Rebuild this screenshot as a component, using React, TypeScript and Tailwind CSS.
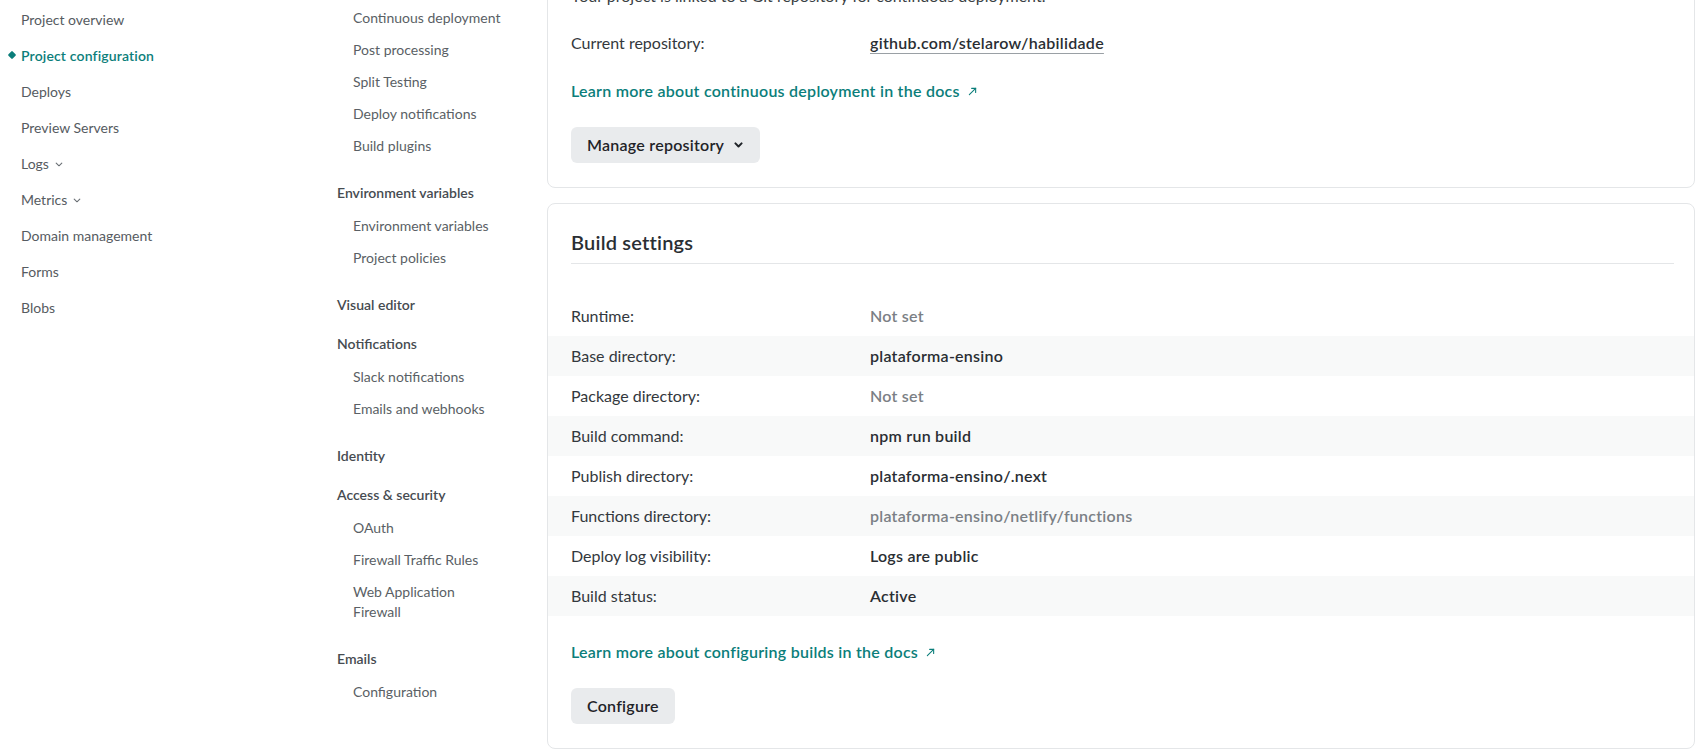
import { ReactNode } from "react";

const font = { fontFamily: "Lato, 'Open Sans', sans-serif" };

function Chevron({ className }: { className?: string }) {
  return (
    <svg viewBox="0 0 10 6" className={className} fill="none" stroke="currentColor" strokeWidth="1.4" strokeLinecap="round" strokeLinejoin="round">
      <path d="M1.5 1.2 5 4.6 8.5 1.2" />
    </svg>
  );
}

function External() {
  return (
    <svg viewBox="0 0 10 10" className="ml-2 h-[9px] w-[9px]" fill="none" stroke="currentColor" strokeWidth="1.2" strokeLinecap="round">
      <path d="M1.5 8.5 8.5 1.5" />
      <path d="M4 1.5h4.5V6" />
    </svg>
  );
}

const mainNav = [
  { label: "Project overview" },
  { label: "Project configuration", active: true },
  { label: "Deploys" },
  { label: "Preview Servers" },
  { label: "Logs", chevron: true },
  { label: "Metrics", chevron: true },
  { label: "Domain management" },
  { label: "Forms" },
  { label: "Blobs" },
];

const subNav: { title?: string; items: ReactNode[] }[] = [
  { items: ["Continuous deployment", "Post processing", "Split Testing", "Deploy notifications", "Build plugins"] },
  { title: "Environment variables", items: ["Environment variables", "Project policies"] },
  { title: "Visual editor", items: [] },
  { title: "Notifications", items: ["Slack notifications", "Emails and webhooks"] },
  { title: "Identity", items: [] },
  {
    title: "Access & security",
    items: [
      "OAuth",
      "Firewall Traffic Rules",
      <>
        Web Application
        <br />
        Firewall
      </>,
    ],
  },
  { title: "Emails", items: ["Configuration"] },
];

const buildRows = [
  { label: "Runtime:", value: "Not set", muted: true },
  { label: "Base directory:", value: "plataforma-ensino" },
  { label: "Package directory:", value: "Not set", muted: true },
  { label: "Build command:", value: "npm run build" },
  { label: "Publish directory:", value: "plataforma-ensino/.next" },
  { label: "Functions directory:", value: "plataforma-ensino/netlify/functions", muted: true },
  { label: "Deploy log visibility:", value: "Logs are public" },
  { label: "Build status:", value: "Active" },
];

export default function App() {
  return (
    <div className="flex h-[755px] w-full overflow-hidden bg-white" style={font}>
      {/* Site nav */}
      <nav className="w-[300px] shrink-0 pt-px text-[14px] text-[#565b61]">
        {mainNav.map((item) => (
          <div key={item.label} className="relative flex h-9 items-center pl-[21px]">
            {item.active && <span className="absolute left-[9px] top-[15px] h-[6px] w-[6px] rotate-45 rounded-[1px] bg-[#0b7e7a]" />}
            <span className={item.active ? "font-semibold tracking-[0.15px] text-[#0b7e7a]" : ""}>{item.label}</span>
            {item.chevron && <Chevron className="ml-[6px] mt-[2px] h-[5px] w-[8px] text-[#6b7075]" />}
          </div>
        ))}
      </nav>

      {/* Settings sub nav */}
      <aside className="w-[247px] shrink-0 pl-[37px] pt-[2px] text-[14px]">
        {subNav.map((section, i) => (
          <div key={i} className={section.items.length ? "mb-2 pb-[6px]" : "mb-[7px]"}>
            {section.title && (
              <div className={`flex h-8 items-center font-semibold text-[#464b51] ${section.items.length ? "mb-[2px]" : ""}`}>
                {section.title}
              </div>
            )}
            {section.items.map((item, j) => (
              <div key={j} className="py-[6px] pl-4 leading-5 text-[#5a5f65]">
                {item}
              </div>
            ))}
          </div>
        ))}
      </aside>

      {/* Main content */}
      <main className="mt-[-41px] min-w-0 flex-1 text-[16px] text-[#2f3338]">
        <section className="rounded-lg border border-[#e4e6e8] pb-6 pl-[23px] pr-5 pt-6">
          <p className="leading-6 text-[#3a3f44]">Your project is linked to a Git repository for continuous deployment.</p>
          <div className="mt-[23px] grid grid-cols-[299px_1fr] leading-6">
            <span className="text-[#33383d]">Current repository:</span>
            <span>
              <a className="font-semibold tracking-[0.28px] text-[#2a2e33] underline decoration-[#9aa0a5] underline-offset-[4px]">github.com/stelarow/habilidade</a>
            </span>
          </div>
          <a className="mt-6 flex items-center font-semibold leading-6 tracking-[0.25px] text-[#0b7e7a]">
            Learn more about continuous deployment in the docs
            <External />
          </a>
          <button className="mt-6 flex h-9 items-center rounded-md bg-[#e9ebed] pl-4 pr-[17px] font-semibold tracking-[0.25px] text-[#1f2328]">
            Manage repository
            <svg viewBox="0 0 10 6" className="ml-[10px] h-[6px] w-[9px]" fill="none" stroke="currentColor" strokeWidth="2.2" strokeLinecap="round" strokeLinejoin="round">
              <path d="M1.6 1.2 5 4.6 8.4 1.2" />
            </svg>
          </button>
        </section>

        <section className="mt-[15px] rounded-lg border border-[#e4e6e8] pb-6 pl-[23px] pr-5 pt-6">
          <h2 className="border-b border-[#e4e6e8] pb-[7px] text-[20px] font-semibold leading-7 tracking-[0.2px] text-[#2a2e33]">Build settings</h2>
          <div className="-ml-[23px] -mr-5 mt-8">
            {buildRows.map((row, i) => (
              <div key={row.label} className={`grid h-10 grid-cols-[299px_1fr] items-center pl-[23px] ${i % 2 === 1 ? "bg-[#f8f9f9]" : ""}`}>
                <span className="text-[#33383d]">{row.label}</span>
                <span className={`font-semibold tracking-[0.25px] ${row.muted ? "text-[#7b8085]" : "text-[#2a2e33]"}`}>{row.value}</span>
              </div>
            ))}
          </div>
          <a className="mt-6 flex items-center font-semibold leading-6 tracking-[0.25px] text-[#0b7e7a]">
            Learn more about configuring builds in the docs
            <External />
          </a>
          <button className="mt-6 flex h-9 items-center rounded-md bg-[#e9ebed] px-4 font-semibold tracking-[0.25px] text-[#1f2328]">Configure</button>
        </section>
      </main>
    </div>
  );
}
